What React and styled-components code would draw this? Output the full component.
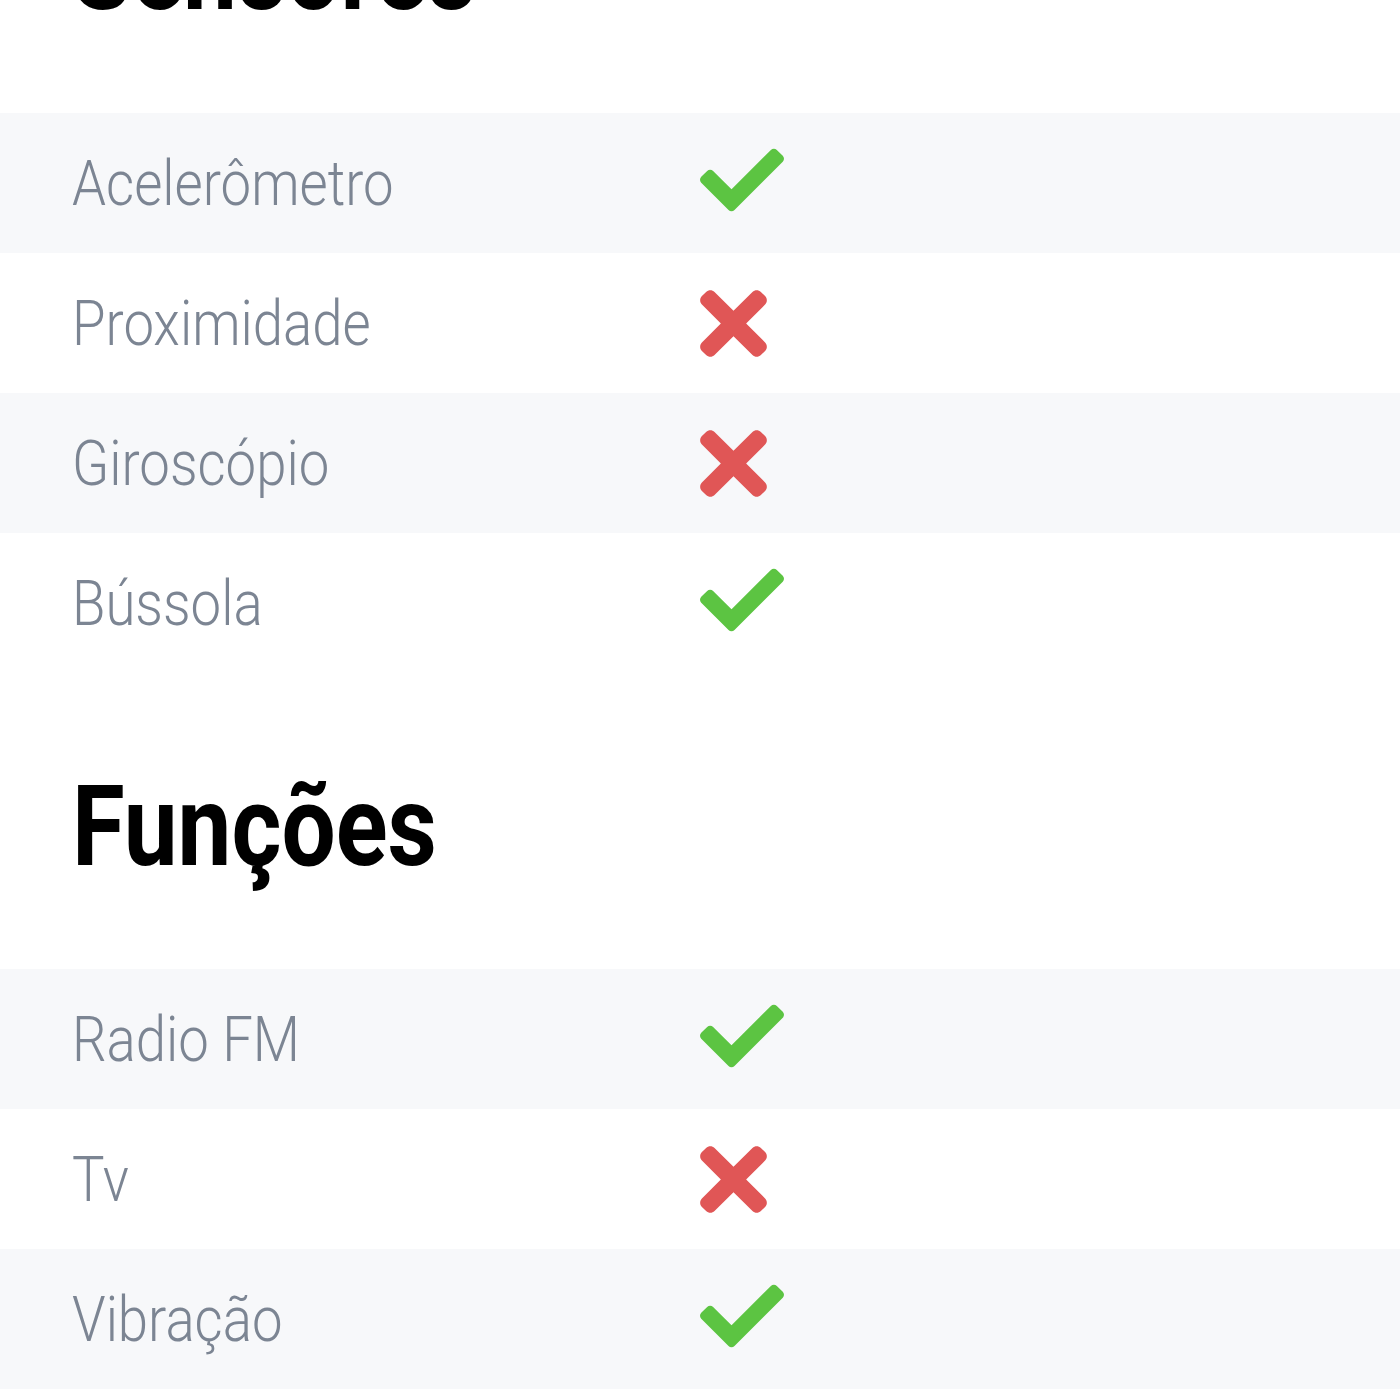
import styled, { createGlobalStyle } from "styled-components";
import { FaCheck, FaTimes } from "react-icons/fa";

const GlobalStyle = createGlobalStyle`
  body {
    margin: 0;
    background: #ffffff;
    font-family: Roboto, "Liberation Sans", sans-serif;
  }
`;

const Page = styled.div`
  display: flex;
  flex-direction: column;
  margin-top: -87px;
`;

const Section = styled.section`
  display: flex;
  flex-direction: column;

  & + & {
    margin-top: 96px;
  }
`;

const Title = styled.h2`
  margin: 0 0 86px;
  padding-left: 72px;
  font-size: 114px;
  line-height: 114px;
  font-weight: 700;
  color: #000;
`;

const Narrow = styled.span`
  display: inline-block;
  transform: scaleX(${(p) => p.$scale || 0.865});
  transform-origin: left center;
  white-space: nowrap;
`;

const Row = styled.div`
  display: grid;
  grid-template-columns: 628px 1fr;
  align-items: center;
  height: 140px;
  padding-left: 72px;
  background: ${(p) => (p.$striped ? "#f7f8fa" : "#ffffff")};
`;

const Label = styled.div`
  font-size: 63px;
  font-weight: 300;
  color: #7c8593;
`;

const Mark = styled.div`
  display: flex;
  align-items: center;
  color: ${(p) => (p.$ok ? "#5cc442" : "#e05656")};

  svg {
    display: block;
    width: ${(p) => (p.$ok ? 84 : 67)}px;
    height: ${(p) => (p.$ok ? 84 : 97)}px;
    transform: ${(p) => (p.$ok ? "translateY(-3px)" : "none")};
  }
`;

const sections = [
  {
    title: "Sensores",
    items: [
      ["Acelerômetro", true],
      ["Proximidade", false],
      ["Giroscópio", false],
      ["Bússola", true],
    ],
  },
  {
    title: "Funções",
    items: [
      ["Radio FM", true],
      ["Tv", false],
      ["Vibração", true],
    ],
  },
];

export default function App() {
  return (
    <>
      <GlobalStyle />
      <Page>
        {sections.map((s) => (
          <Section key={s.title}>
            <Title>
              <Narrow $scale={0.843}>{s.title}</Narrow>
            </Title>
            {s.items.map(([name, ok], i) => (
              <Row key={name} $striped={i % 2 === 0}>
                <Label>
                  <Narrow>{name}</Narrow>
                </Label>
                <Mark $ok={ok}>{ok ? <FaCheck /> : <FaTimes />}</Mark>
              </Row>
            ))}
          </Section>
        ))}
      </Page>
    </>
  );
}
